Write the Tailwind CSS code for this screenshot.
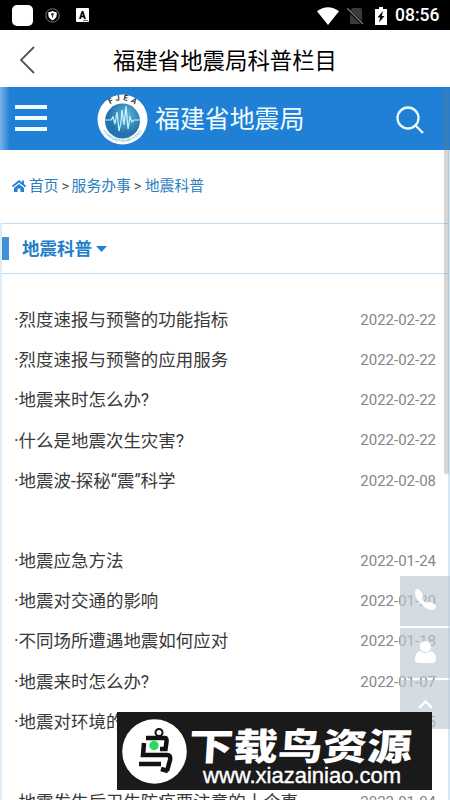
<!DOCTYPE html>
<html lang="zh-CN">
<head>
  <meta charset="UTF-8" />
  <meta name="viewport" content="width=device-width, initial-scale=1.0" />
  <title>福建省地震局科普栏目</title>
  <script src="https://cdn.jsdelivr.net/npm/@tailwindcss/browser@4"></script>
</head>
<body class="relative flex h-[800px] w-[450px] flex-col overflow-hidden bg-white font-['Roboto','Noto_Sans_CJK_SC',sans-serif]">

  <!-- Status bar -->
  <div class="flex h-[30px] shrink-0 items-center justify-between bg-black pr-[11px] pl-3">
    <div class="flex items-center">
      <span class="h-[21px] w-[21px] rounded-[5px] bg-white"></span>
      <svg class="ml-3 h-[15px] w-[15px]" viewBox="0 0 15 15">
        <circle cx="7.5" cy="7.5" r="6.7" fill="none" stroke="#777" stroke-width="1" />
        <path d="M3.3 4.2Q6 4 7.5 3Q9 4 11.7 4.2V7Q11.5 10.5 7.5 12.4Q3.5 10.5 3.3 7Z" fill="#fff" />
        <circle cx="7.5" cy="6.3" r="1.3" fill="#333" /><path d="M7.5 6.5V9.5" stroke="#333" />
      </svg>
      <span class="relative ml-4 flex h-[14px] w-[13px] items-center justify-center rounded-[1px] bg-white text-[10px] font-black text-black">A
        <i class="absolute right-px bottom-px h-px w-[5px] bg-gray-500"></i>
      </span>
    </div>
    <div class="flex items-center pt-[1px]">
      <svg class="h-[18px] w-[22px]" viewBox="0 0 22 18"><path d="M0 4.3Q11-3.7 22 4.3L11 18Z" fill="#fff" /></svg>
      <svg class="ml-[8px] h-[18px] w-[17px]" viewBox="0 0 17 18">
        <path d="M5 1H13.5Q15 1 15 2.500V17H3V5Z" fill="#3a3a3a" />
        <path d="M0 2L16 17" stroke="#000" stroke-width="3" /><path d="M0 1L16 17" stroke="#777" stroke-width="1.300" />
      </svg>
      <svg class="ml-[11px] h-[18px] w-[12px]" viewBox="0 0 12 18">
        <path d="M4 0H8V2H12V18H0V2H4Z" fill="#fff" /><path d="M8 4L2.500 10.500H5.200L4 15.500L9.500 9H6.800Z" fill="#000" />
      </svg>
      <span class="ml-[8px] w-[44px] pt-[1px] text-[17.500px] leading-none font-medium text-white">08:56</span>
    </div>
  </div>

  <!-- Title bar -->
  <div class="relative flex h-[57px] shrink-0 items-center justify-center">
    <svg class="absolute top-[16px] left-[19px] h-7 w-4" viewBox="0 0 16 28"><path d="M15 1L2 14L15 27" fill="none" stroke="#555" stroke-width="1.800" /></svg>
    <h1 class="relative top-[3px] text-[22.400px] leading-none text-black">福建省地震局科普栏目</h1>
  </div>

  <main class="relative flex flex-1 flex-col">
    <header class="flex h-[63px] shrink-0 items-center bg-[#2080d6] pt-[2px] pr-[26px] pl-[15px]">
      <div class="relative -top-[2px] flex w-8 flex-col gap-[7px]">
        <span class="h-[4px] bg-[#effcff]"></span>
        <span class="h-[4px] bg-[#effcff]"></span>
        <span class="h-[4px] bg-[#effcff]"></span>
      </div>
      <svg class="ml-[50px] h-[51px] w-[51px]" viewBox="0 0 51 51">
        <defs>
          <radialGradient id="globe" cx="60%" cy="35%"><stop offset="0" stop-color="#64b8dc" /><stop offset="1" stop-color="#2472ae" /></radialGradient>
          <path id="arcTop" d="M6.500 20A20 20 0 0 1 44.500 20" />
          <path id="arcBottom" d="M3.500 30A22.500 22.500 0 0 0 47.500 30" />
        </defs>
        <circle cx="25.500" cy="25.500" r="25" fill="#fff" />
        <circle cx="25.500" cy="27" r="17.500" fill="url(#globe)" />
        <text font-size="7.800" font-weight="700" fill="#333" letter-spacing="3" text-anchor="middle"><textPath href="#arcTop" startOffset="53%">FJEA</textPath></text>
        <text font-size="3.300" fill="#4598ce" text-anchor="middle"><textPath href="#arcBottom" startOffset="50%">FUJIAN EARTHQUAKE AGENCY</textPath></text>
        <path d="M8 26H14L16 23L18 30L20 18L22 37L24 28L25 16L27 31L29 12L31 35L33 23L35 28L37 26H43" fill="none" stroke="#c5f4fa" stroke-width="1.200" />
      </svg>
      <span class="relative top-[1px] ml-[7px] text-[24.900px] leading-none text-[#effcff]">福建省地震局</span>
      <svg class="ml-auto h-7 w-7" viewBox="0 0 28 28" fill="none" stroke="#effcff" stroke-width="2.300">
        <circle cx="12" cy="12" r="10.500" /><path d="M19 19L27 27" />
      </svg>
    </header>

    <nav class="flex h-[73px] shrink-0 items-center pl-3 text-[14.800px] leading-none text-[#2b80bf]">
      <svg class="relative -top-[1px] mr-[3px] h-[12px] w-[14px]" viewBox="0 0 14 12">
        <path d="M7 4L12 8V12H8.500V8.500H5.500V12H2V8Z" fill="#2080d6" />
        <path d="M.5 6.500L7 1.200L13.500 6.500M11 .5V4" fill="none" stroke="#2080d6" stroke-width="1.900" />
      </svg>
      <span>首页</span><span class="w-[13px] pl-[3px] text-[#555]">&gt;</span><span>服务办事</span><span class="w-[14px] pl-[3px] text-[#555]">&gt;</span><span>地震科普</span>
    </nav>

    <h2 class="flex h-[51px] shrink-0 items-center border-y border-[#c3def3] pl-[1px] text-[17.500px] leading-none font-bold text-[#247fca]">
      <span class="mr-[13px] h-[23px] w-[8px] bg-[#3d92d9]"></span><span class="relative top-[1px]">地震科普</span>
      <svg class="ml-[4px] h-[6px] w-[11px]" viewBox="0 0 11 6"><path d="M0 0H11L5.500 6Z" fill="#2080d6" /></svg>
    </h2>

    <ul class="mt-[26px] h-[500px] shrink-0 pr-[14px] pl-[14px] text-[17.480px] text-[#393939]">
      <li class="flex h-[40.200px] items-center justify-between"><span class="whitespace-nowrap">·烈度速报与预警的功能指标</span><time class="text-[15px] text-[#868686]">2022-02-22</time></li>
      <li class="flex h-[40.200px] items-center justify-between"><span class="whitespace-nowrap">·烈度速报与预警的应用服务</span><time class="text-[15px] text-[#868686]">2022-02-22</time></li>
      <li class="flex h-[40.200px] items-center justify-between"><span class="whitespace-nowrap">·地震来时怎么办?</span><time class="text-[15px] text-[#868686]">2022-02-22</time></li>
      <li class="flex h-[40.200px] items-center justify-between"><span class="whitespace-nowrap">·什么是地震次生灾害?</span><time class="text-[15px] text-[#868686]">2022-02-22</time></li>
      <li class="flex h-[40.200px] items-center justify-between"><span class="whitespace-nowrap">·地震波-探秘“震”科学</span><time class="text-[15px] text-[#868686]">2022-02-08</time></li>
      <li class="mt-[40.200px] flex h-[40.200px] items-center justify-between"><span class="whitespace-nowrap">·地震应急方法</span><time class="text-[15px] text-[#868686]">2022-01-24</time></li>
      <li class="flex h-[40.200px] items-center justify-between"><span class="whitespace-nowrap">·地震对交通的影响</span><time class="text-[15px] text-[#868686]">2022-01-20</time></li>
      <li class="flex h-[40.200px] items-center justify-between"><span class="whitespace-nowrap">·不同场所遭遇地震如何应对</span><time class="text-[15px] text-[#868686]">2022-01-18</time></li>
      <li class="flex h-[40.200px] items-center justify-between"><span class="whitespace-nowrap">·地震来时怎么办?</span><time class="text-[15px] text-[#868686]">2022-01-07</time></li>
      <li class="flex h-[40.200px] items-center justify-between"><span class="whitespace-nowrap">·地震对环境的影响</span><time class="text-[15px] text-[#868686]">2022-01-05</time></li>
      <li class="mt-[40.200px] flex h-[40.200px] items-center justify-between"><span class="whitespace-nowrap">·地震发生后卫生防疫要注意的十个事</span><time class="text-[15px] text-[#868686]">2022-01-04</time></li>
    </ul>

    <!-- Edges and scrollbar -->
    <div class="absolute top-0 left-0 h-[63px] w-[10px] bg-linear-to-r from-white/40 to-transparent"></div>
    <div class="absolute top-[136px] bottom-0 left-0 w-[2px] bg-[#dcebf5]"></div>
    <div class="absolute top-[63px] right-0 bottom-0 w-[2px] bg-[#d3e7f5]"></div>
    <div class="absolute top-[3px] right-[1px] h-[384px] w-[5px] rounded-full bg-[#777]/30"></div>
  </main>

  <!-- Side tools -->
  <div class="absolute top-[576px] right-0 flex w-[50px] flex-col gap-[2px]">
    <div class="flex h-[50px] items-center justify-center bg-[#bdc8d2]/65">
      <svg class="relative -top-[2px] h-[21px] w-[21px]" viewBox="0 0 21 21"><path d="M1 1Q3-1 5 2L7.500 6Q8 8 6 9.500Q7.500 12.500 11.500 14.500Q13 12.500 15.500 13.500L20 16Q21.500 18 19 20Q14 22 7 15.500Q-1 8 1 1Z" fill="#fff" stroke="#fff" /></svg>
    </div>
    <div class="flex h-[50px] items-center justify-center bg-[#bdc8d2]/65">
      <svg class="relative -top-[1px] h-[22px] w-[21px]" viewBox="0 0 21 22"><circle cx="10.500" cy="5.500" r="5.500" fill="#fff" /><path d="M5 10Q10.500 14 16 10Q21 12 21 18Q21 22 17 22H4Q0 22 0 18Q0 12 5 10Z" fill="#fff" /></svg>
    </div>
    <div class="flex h-[49px] items-center justify-center bg-[#bdc8d2]/65">
      <svg class="h-[9px] w-[15px]" viewBox="0 0 15 9"><path d="M1 8L7.500 1.500L14 8" fill="none" stroke="#fff" stroke-width="2.400" /></svg>
    </div>
  </div>

  <!-- Banner -->
  <div class="absolute top-[712px] left-[117px] flex h-[78px] w-[315px] items-center bg-[#1a1a1a] pl-[5px] text-white">
    <svg class="h-[65px] w-[65px] shrink-0" viewBox="0 0 65 65">
      <circle cx="32.500" cy="32.500" r="32.300" fill="#fff" />
      <circle cx="37" cy="13.500" r="3.500" fill="none" stroke="#111" stroke-width="2" />
      <g fill="none" stroke="#111" stroke-width="4.500">
        <path d="M24 19H43Q45 19 44.500 23L43.500 30H38" /><path d="M22 24L21 36H45Q49 36 48 41L45 52" /><path d="M17 45H39" /><path d="M39 50L46 52" />
      </g>
      <circle cx="32" cy="26.500" r="4.700" fill="#25dc62" />
    </svg>
    <div class="relative ml-[2px] h-full w-[230px]">
      <span class="absolute top-[9px] left-0 origin-center -skew-x-3 scale-y-[0.83] font-['Noto_Sans_CJK_SC',sans-serif] text-[44.600px] leading-[46px] font-black whitespace-nowrap">下载鸟资源</span>
      <span class="absolute top-[52px] left-[14px] font-['Liberation_Sans',sans-serif] text-[22px] leading-[24px] whitespace-nowrap [-webkit-text-stroke:0.4px_white]">www.xiazainiao.com</span>
    </div>
  </div>
</body>
</html>
